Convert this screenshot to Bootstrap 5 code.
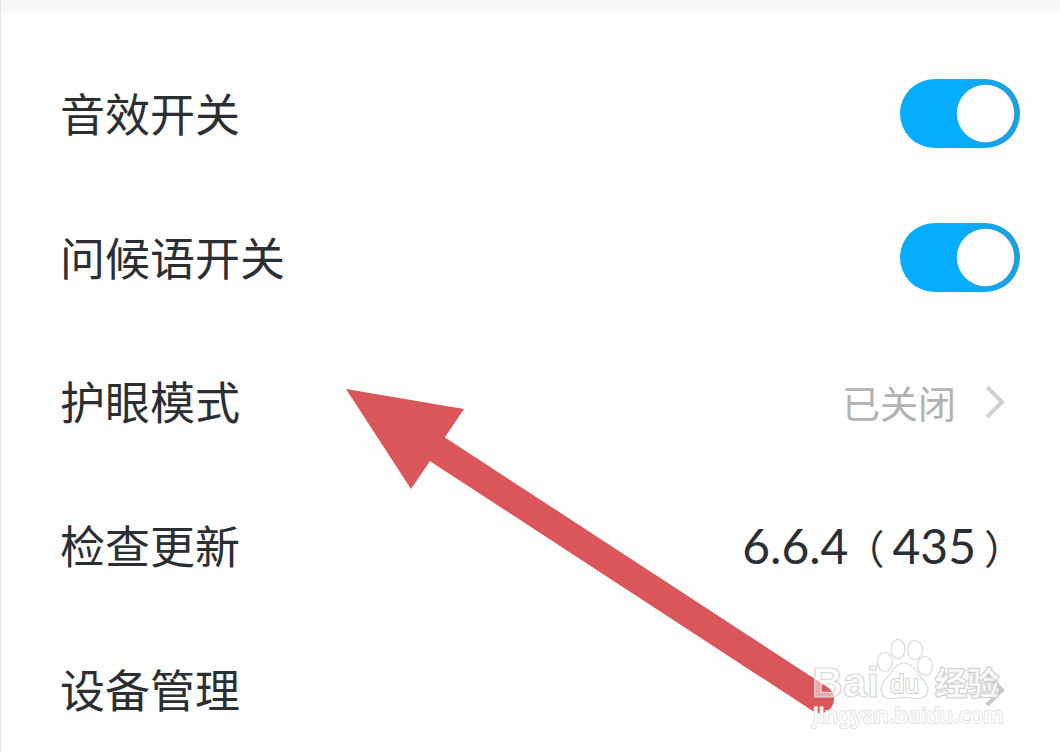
<!DOCTYPE html>
<html lang="zh-CN">
<head>
<meta charset="utf-8">
<meta name="viewport" content="width=device-width, initial-scale=1">
<title>设置</title>
<link href="https://cdn.jsdelivr.net/npm/bootstrap@5.3.0/dist/css/bootstrap.min.css" rel="stylesheet">
<style>
  body { font-family: "Noto Sans CJK SC", sans-serif; color: #2b2f33; background: #fefefe; overflow-x: hidden; }
  .settings-page { border-left: 1px solid #e4e4e4; overflow: hidden; min-height: 100vh; }
  .top-strip { height: 12px; background: #f7f7f7; }
  .settings-list { padding: 30px 40px 0 59px; margin-bottom: -10px; }
  .setting-row { height: 144px; font-size: 45px; line-height: 64px; color: inherit; }
  .setting-row > :first-child { padding-bottom: 2px; }
  .setting-switch { padding: 0; min-height: 0; }
  .setting-switch .form-check-input {
    float: none; display: block; margin: 0; width: 120px; height: 69px; border: 0; border-radius: 35px;
  }
  .setting-switch .form-check-input:checked {
    background-color: #06adff;
    background-image: url("data:image/svg+xml,%3csvg xmlns='http://www.w3.org/2000/svg' viewBox='-4 -4 8 8'%3e%3ccircle r='3.33' fill='%23fff'/%3e%3c/svg%3e"), linear-gradient(90deg, #06adff 50%, #1ba1e2 90%);
    background-size: contain, cover;
  }
  .state-text { font-size: 38px; color: #b2b2b2; }
  .version-text { font-family: Lato, "Noto Sans CJK SC", sans-serif; font-size: 48px; margin-right: -4px; padding-top: 2px; }
  .paren { font-size: 40px; }
  .paren-open { margin: 0 8px 0 -4px; }
  .paren-close { margin-left: 8px; }
  .chevron { margin: 0 14px 0 28px; }
  .pointer-arrow { left: 345px; top: 388px; }
  .site-mark { right: 50px; top: 632px; }
</style>
</head>
<body>
<main class="settings-page position-relative">
  <div class="top-strip"></div>
  <div class="settings-list">
    <div class="setting-row d-flex align-items-center justify-content-between">
      <label for="sound">音效开关</label>
      <div class="form-check form-switch setting-switch"><input class="form-check-input" type="checkbox" role="switch" id="sound" checked></div>
    </div>
    <div class="setting-row d-flex align-items-center justify-content-between">
      <label for="greeting">问候语开关</label>
      <div class="form-check form-switch setting-switch"><input class="form-check-input" type="checkbox" role="switch" id="greeting" checked></div>
    </div>
    <a href="#eye" class="setting-row d-flex align-items-center justify-content-between text-decoration-none">
      <span>护眼模式</span>
      <span class="d-flex align-items-center"><span class="state-text">已关闭</span>
        <svg class="chevron" width="22" height="34" viewBox="0 0 22 34" fill="none" stroke="#d2d2d2" stroke-width="4" aria-hidden="true"><path d="M3 2 18 17 3 32"/></svg></span>
    </a>
    <a href="#update" class="setting-row d-flex align-items-center justify-content-between text-decoration-none">
      <span>检查更新</span>
      <span class="version-text">6.6.4<span class="paren paren-open">（</span>435<span class="paren paren-close">）</span></span>
    </a>
    <a href="#devices" class="setting-row d-flex align-items-center justify-content-between text-decoration-none">
      <span>设备管理</span>
      <svg class="chevron" width="22" height="34" viewBox="0 0 22 34" fill="none" stroke="#c8c8c8" stroke-width="4" aria-hidden="true"><path d="M3 2 18 17 3 32"/></svg>
    </a>
  </div>

  <svg class="pointer-arrow position-absolute pe-none" width="490" height="328" viewBox="346 388 490 328" aria-hidden="true">
    <path d="M437 449 820 699" stroke="#db565b" stroke-width="28" stroke-linecap="round"/>
    <path d="M346 389 464 409 445 437 430 461 411 489Z" fill="#db565b"/>
  </svg>

  <svg class="site-mark position-absolute pe-none" width="200" height="110" viewBox="810 632 200 110" role="img" aria-label="百度经验">
    <g fill="#fff" fill-opacity=".5" stroke="#d9d9d9" stroke-width="1.2">
      <ellipse cx="885" cy="662" rx="7.5" ry="9.5"/>
      <ellipse cx="898" cy="649" rx="7" ry="9.7"/>
      <ellipse cx="915" cy="650" rx="7.5" ry="9.5"/>
      <ellipse cx="925" cy="666" rx="7.5" ry="9.5"/>
      <path d="M904 663C897 663 893 669 890 674C886 679 881 683 881 690C882 698 889 700 896 698C902 697 907 697 913 698C921 700 928 697 928 689C928 683 922 679 918 674C915 669 911 663 904 663Z"/>
      <text x="812" y="697" font-size="43" font-weight="700" font-family="Liberation Sans, sans-serif">Bai</text>
      <text x="890" y="693" font-size="26" font-family="Liberation Sans, sans-serif" fill-opacity="1" stroke="#cfcfcf" stroke-width="2" paint-order="stroke">du</text>
      <text x="935" y="695" font-size="32" font-weight="700" font-family="Noto Sans CJK SC, sans-serif" stroke="#cfcfcf" stroke-width="2" paint-order="stroke" fill-opacity=".7">经验</text>
    </g>
    <text x="813" y="723" font-size="22" font-family="Noto Sans, sans-serif" fill="#fff" stroke="#e2e2e2" stroke-width="2" paint-order="stroke">jingyan.baidu.com</text>
  </svg>
</main>
<script src="https://cdn.jsdelivr.net/npm/bootstrap@5.3.0/dist/js/bootstrap.bundle.min.js"></script>
</body>
</html>
